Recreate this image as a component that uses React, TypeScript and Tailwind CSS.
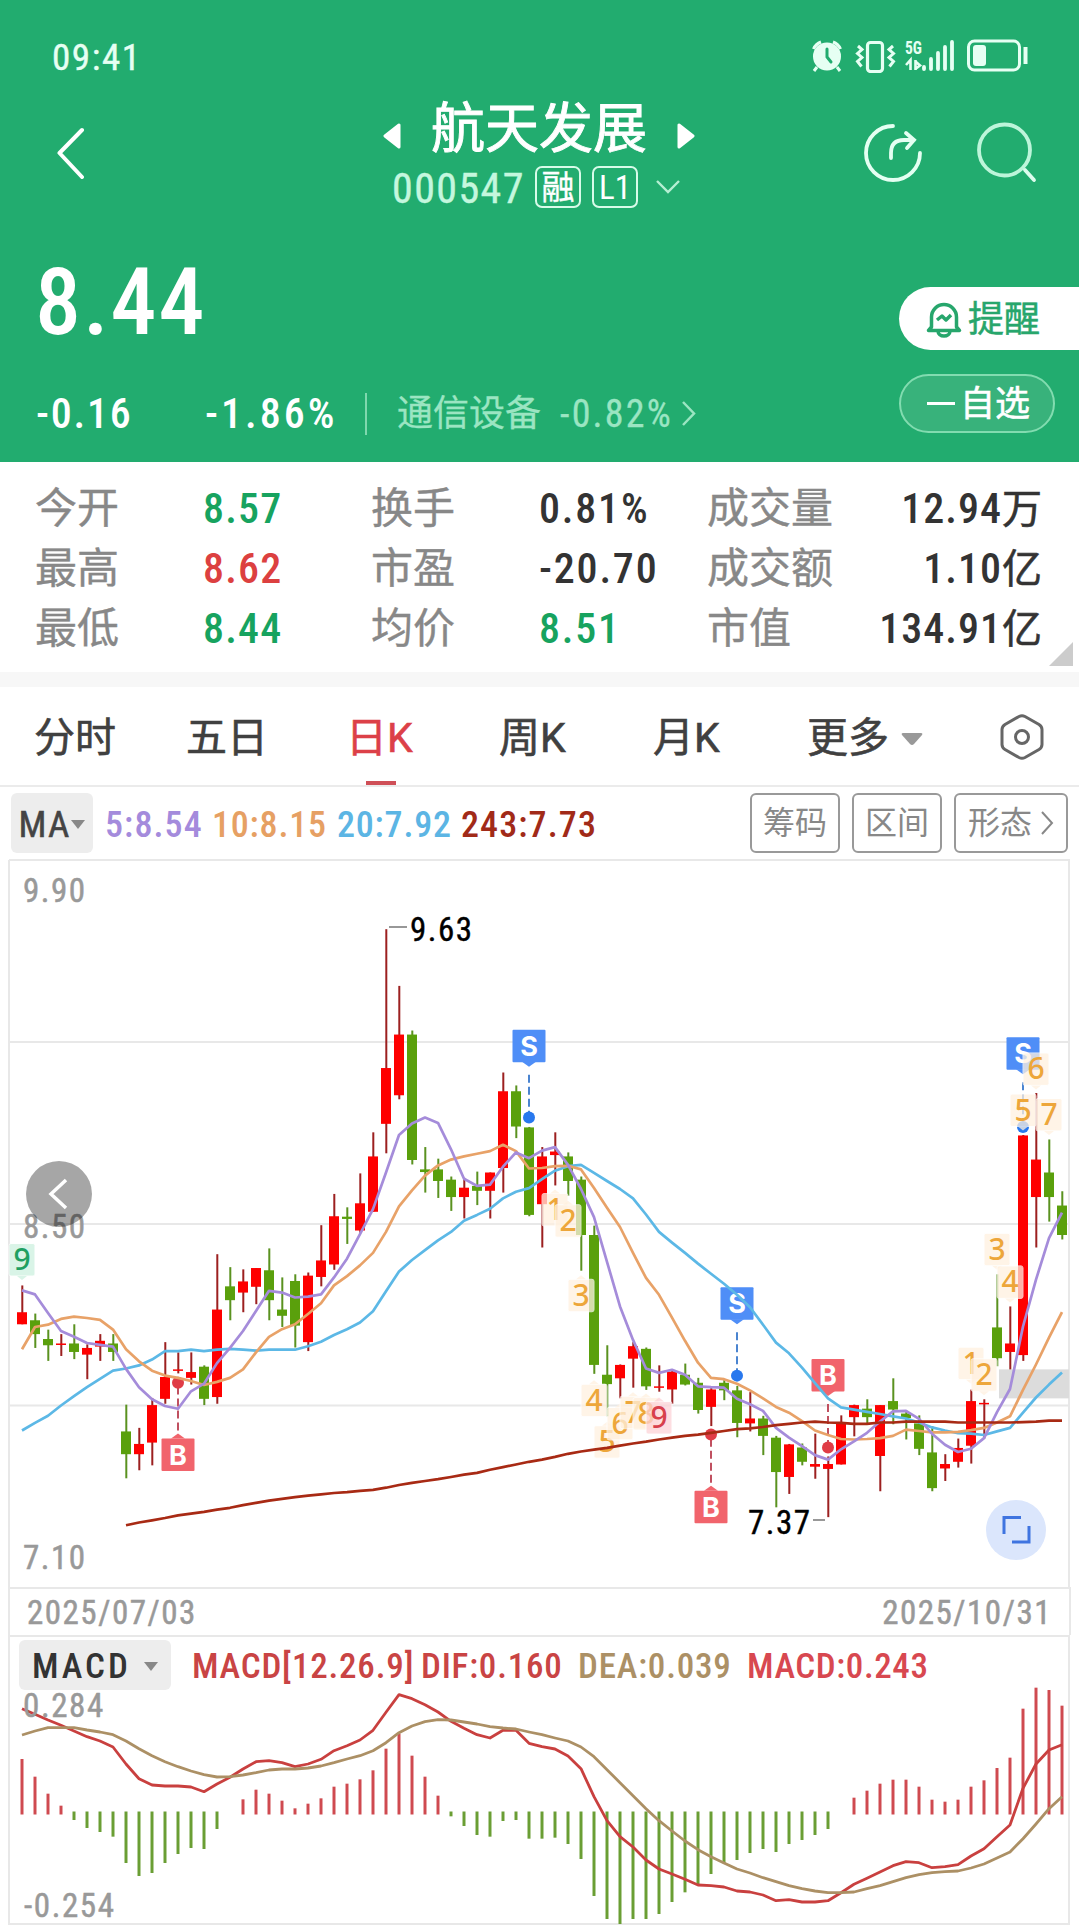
const X0 = 22;
const STEP = 13;
const K_SCALE = 2.24;
const MACD_ZERO = 759;

// high, low, body top, body bottom, rising
const candles: number[][] = [
  [953, 1040, 1013, 1040, 1],
  [1016, 1093, 1031, 1062, 0],
  [1052, 1122, 1073, 1087, 0],
  [1062, 1111, 1083, 1086, 1],
  [1040, 1118, 1083, 1102, 0],
  [1085, 1163, 1093, 1108, 1],
  [1062, 1122, 1077, 1090, 1],
  [1062, 1122, 1083, 1102, 0],
  [1220, 1385, 1280, 1331, 0],
  [1272, 1367, 1308, 1331, 1],
  [1205, 1356, 1221, 1305, 1],
  [1080, 1218, 1158, 1207, 1],
  [1103, 1150, 1141, 1144, 1],
  [1103, 1175, 1147, 1160, 1],
  [1132, 1221, 1135, 1207, 0],
  [883, 1218, 1007, 1203, 1],
  [912, 1031, 955, 986, 0],
  [917, 1013, 944, 969, 1],
  [914, 995, 914, 956, 1],
  [870, 1031, 919, 986, 0],
  [935, 1046, 1007, 1021, 0],
  [928, 1092, 943, 1043, 0],
  [924, 1100, 931, 1080, 1],
  [818, 955, 897, 934, 1],
  [748, 918, 798, 906, 1],
  [778, 860, 799, 804, 0],
  [702, 835, 769, 830, 1],
  [610, 788, 664, 788, 1],
  [155, 657, 466, 591, 1],
  [282, 536, 391, 527, 1],
  [382, 682, 391, 672, 0],
  [643, 745, 693, 699, 0],
  [669, 757, 693, 719, 0],
  [709, 786, 716, 755, 0],
  [712, 803, 734, 755, 1],
  [698, 773, 730, 741, 0],
  [700, 803, 700, 741, 1],
  [476, 745, 518, 690, 1],
  [505, 623, 518, 597, 0],
  [598, 798, 599, 795, 0],
  [643, 868, 664, 771, 1],
  [610, 729, 653, 661, 1],
  [655, 752, 664, 719, 0],
  [709, 920, 716, 840, 0],
  [819, 1151, 840, 1131, 0],
  [1087, 1246, 1153, 1174, 0],
  [1130, 1206, 1131, 1161, 1],
  [1080, 1182, 1089, 1117, 1],
  [1092, 1187, 1095, 1179, 0],
  [1132, 1191, 1179, 1182, 1],
  [1143, 1218, 1146, 1186, 1],
  [1128, 1177, 1153, 1175, 0],
  [1160, 1240, 1171, 1232, 0],
  [1183, 1268, 1186, 1225, 1],
  [1165, 1210, 1171, 1188, 0],
  [1178, 1293, 1188, 1261, 0],
  [1192, 1280, 1251, 1262, 1],
  [1245, 1333, 1251, 1290, 0],
  [1290, 1450, 1294, 1371, 0],
  [1308, 1420, 1309, 1382, 1],
  [1307, 1356, 1316, 1348, 0],
  [1285, 1386, 1353, 1359, 1],
  [1336, 1472, 1353, 1364, 1],
  [1244, 1354, 1259, 1354, 1],
  [1220, 1291, 1221, 1248, 1],
  [1208, 1264, 1229, 1248, 0],
  [1221, 1414, 1221, 1335, 1],
  [1161, 1264, 1212, 1231, 0],
  [1233, 1298, 1240, 1250, 0],
  [1244, 1333, 1262, 1319, 0],
  [1268, 1414, 1327, 1407, 0],
  [1331, 1391, 1353, 1363, 1],
  [1296, 1361, 1317, 1348, 1],
  [1186, 1352, 1212, 1312, 1],
  [1208, 1296, 1216, 1219, 1],
  [928, 1134, 1047, 1116, 0],
  [1000, 1141, 1083, 1102, 1],
  [616, 1122, 617, 1109, 1],
  [522, 868, 671, 755, 1],
  [626, 810, 700, 755, 0],
  [742, 850, 774, 840, 0],
];

const ma5 = [
  964, 973, 1015, 1055, 1068, 1082, 1086, 1090, 1140, 1181, 1208, 1223, 1229, 1190, 1173, 1127, 1093, 1055, 1010, 965,
  969, 980, 978, 973, 935, 893, 838, 782, 700, 616, 590, 577, 589, 648, 714, 730, 727, 687, 655, 668,
  651, 643, 683, 737, 800, 900, 1000, 1075, 1139, 1149, 1142, 1153, 1179, 1181, 1182, 1207, 1219, 1234, 1272, 1294,
  1313, 1333, 1343, 1320, 1302, 1283, 1258, 1235, 1234, 1252, 1285, 1310, 1326, 1319, 1295, 1237, 1185, 1045, 940, 847,
  790,
];
const ma10 = [
  1096, 1046, 1041, 1028, 1023, 1026, 1030, 1052, 1096, 1123, 1144, 1155, 1160, 1167, 1176, 1169, 1160, 1141, 1103, 1068,
  1051, 1040, 1017, 993, 953, 932, 908, 880, 833, 776, 740, 707, 684, 671, 664, 658, 652, 638, 652, 691,
  690, 686, 685, 693, 735, 779, 822, 880, 936, 974, 1025, 1077, 1126, 1160, 1163, 1173, 1188, 1206, 1225, 1238,
  1257, 1278, 1288, 1297, 1298, 1297, 1295, 1290, 1276, 1279, 1282, 1282, 1281, 1277, 1272, 1260, 1246, 1187, 1130, 1070,
  1013,
];
const ma20 = [
  1278, 1261, 1245, 1222, 1201, 1181, 1162, 1144, 1139, 1132, 1119, 1100, 1100, 1097, 1100, 1097, 1095, 1097, 1099, 1097,
  1097, 1097, 1089, 1079, 1064, 1051, 1036, 1011, 966, 922, 896, 874, 852, 833, 808, 795, 781, 758, 743, 735,
  715, 696, 686, 683, 701, 719, 737, 758, 794, 833, 857, 880, 904, 927, 949, 974, 1002, 1041, 1081, 1105,
  1137, 1172, 1206, 1226, 1231, 1236, 1241, 1246, 1251, 1260, 1271, 1278, 1284, 1285, 1288, 1280, 1272, 1238, 1204, 1175,
  1148,
];
// starts at the ninth day
const ma243 = [
  1490, 1484, 1479, 1474, 1468, 1464, 1460, 1455, 1451, 1445, 1440, 1435, 1431, 1427, 1424, 1421, 1418, 1416, 1413, 1411,
  1406, 1400, 1395, 1391, 1387, 1382, 1377, 1373, 1366, 1360, 1354, 1348, 1343, 1337, 1330, 1325, 1321, 1317, 1312, 1307,
  1303, 1298, 1294, 1290, 1287, 1283, 1279, 1275, 1273, 1270, 1266, 1263, 1260, 1258, 1260, 1261, 1263, 1263, 1260, 1260,
  1258, 1258, 1258, 1258, 1260, 1260, 1260, 1260, 1260, 1259, 1258, 1256, 1256,
];

const hist = [
  597, 650, 701, 737, 780, 804, 816, 830, 909, 948, 939, 909, 882, 864, 867, 807, 0, 718, 689, 701,
  722, 745, 731, 715, 680, 671, 658, 631, 566, 521, 587, 650, 707, 769, 798, 825, 830, 783, 780, 836,
  836, 833, 852, 897, 1008, 1077, 1092, 1077, 1077, 1062, 1026, 997, 975, 942, 910, 900, 879, 867, 876, 852,
  840, 825, 807, 0, 713, 692, 671, 659, 659, 680, 719, 725, 719, 680, 661, 624, 593, 446, 383, 390,
  437,
];
const dif = [
  446, 463, 480, 496, 513, 530, 543, 561, 612, 656, 675, 678, 678, 681, 695, 672, 652, 627, 605, 602,
  608, 620, 612, 598, 572, 557, 540, 511, 457, 404, 416, 434, 456, 484, 505, 524, 534, 511, 511, 550,
  560, 567, 588, 626, 710, 782, 830, 861, 900, 927, 942, 958, 975, 977, 981, 993, 996, 1005, 1022, 1019,
  1026, 1026, 1022, 998, 973, 955, 936, 917, 905, 908, 923, 920, 914, 888, 866, 830, 795, 685, 612, 570,
  554,
];
const dea = [
  525, 513, 503, 503, 503, 510, 516, 524, 543, 566, 587, 605, 620, 633, 644, 651, 650, 645, 638, 630,
  627, 627, 624, 618, 608, 597, 587, 572, 548, 518, 498, 485, 479, 480, 486, 492, 500, 504, 507, 516,
  524, 534, 543, 561, 590, 629, 668, 707, 746, 782, 813, 843, 869, 890, 909, 927, 939, 953, 965, 977,
  986, 993, 998, 998, 996, 986, 977, 965, 953, 944, 938, 935, 933, 924, 912, 894, 876, 836, 792, 746,
  710,
];

// day, y, digit, placed above the candle
const counts: [number, number, string, boolean][] = [
  [41, 783, "1", false],
  [42, 808, "2", false],
  [43, 975, "3", false],
  [44, 1210, "4", false],
  [45, 1303, "5", false],
  [46, 1262, "6", false],
  [47, 1237, "7", false],
  [48, 1240, "8", false],
  [49, 1249, "9", false],
  [73, 1127, "1", true],
  [74, 1153, "2", true],
  [75, 872, "3", true],
  [76, 945, "4", true],
  [77, 560, "5", true],
  [78, 468, "6", true],
  [79, 570, "7", true],
  [0, 895, "9", true],
];

// day, flag top, dot
const signals: { type: string; day: number; top: number; dot: number }[] = [
  { type: "S", day: 39, top: 380, dot: 577 },
  { type: "S", day: 55, top: 957, dot: 1155 },
  { type: "S", day: 77, top: 397, dot: 598 },
  { type: "B", day: 62, top: 1118, dot: 1316 },
  { type: "B", day: 12, top: 1296, dot: 1171 },
  { type: "B", day: 53, top: 1413, dot: 1287 },
];

const stats = [
  ["今开", "8.57", "text-[#17a35f]", "换手", "0.81%", "text-[#333]", "成交量", "12.94万"],
  ["最高", "8.62", "text-[#dc4040]", "市盈", "-20.70", "text-[#333]", "成交额", "1.10亿"],
  ["最低", "8.44", "text-[#17a35f]", "均价", "8.51", "text-[#17a35f]", "市值", "134.91亿"],
];

const dayX = (i: number) => X0 + i * STEP;
const kY = (v: number) => v / K_SCALE + 1;
const toPoints = (values: number[], y: (v: number) => number, start = 0) =>
  values.map((v, i) => `${dayX(i + start)},${y(v).toFixed(1)}`).join(" ");

function StatusBar() {
  return (
    <div className="flex h-[112px] items-center pl-[52px] pr-[50px] text-[#e6fff3]">
      <span className="mt-[2px] text-[37px] leading-none tracking-[1.6px] [-webkit-text-stroke:0.4px]">09:41</span>
      <svg className="ml-auto" width="217" height="34" viewBox="0 -1 217 34" fill="none" stroke="currentColor">
        <circle cx="15" cy="16.5" r="14" fill="currentColor" stroke="none" />
        <path d="M1.500 9A13 13 0 0 1 9 2M21 2A13 13 0 0 1 28.500 9M5 27l-3 4M25 27l3 4" strokeWidth="3" />
        <path d="M15 9v8l4 5" stroke="#22ac6f" strokeWidth="3" strokeLinecap="round" />
        <rect x="55.500" y="2.500" width="15" height="29" rx="3" strokeWidth="3.200" />
        <path d="M46 6l4 3.500-4.500 4 4.500 4-4.500 4 4 5M81 6l-4 3.500 4.500 4-4.500 4 4.500 4-4 5" strokeWidth="3" />
        <text x="93" y="14" className="text-[19px] font-bold" textLength="17" lengthAdjust="spacingAndGlyphs" fill="currentColor" stroke="none">
          5G
        </text>
        <path d="M98.500 30V20l-4.500 5M103.500 20v10M104 22l4 3.500-4 3" strokeWidth="2.600" />
        <path d="M112 29v-2M119 29V19M126 29V13M133 29V7M140 29V2" strokeWidth="3.800" strokeLinecap="round" />
        <rect x="156.500" y="1" width="51" height="29" rx="6" strokeWidth="3" />
        <rect x="161" y="5" width="13" height="21" rx="3" fill="currentColor" stroke="none" />
        <path d="M213.500 7v17" strokeWidth="4" />
      </svg>
    </div>
  );
}

function Header() {
  return (
    <header className="h-[462px] bg-[#22ac6f] text-white flex flex-col">
      <StatusBar />
      <div className="-mt-3 flex h-[112px] items-start">
        <svg className="mt-[27px] ml-[55px]" width="32" height="52" fill="none" stroke="currentColor" strokeWidth="4">
          <path d="M27 3L4.500 26 27 50" strokeLinecap="round" strokeLinejoin="round" />
        </svg>
        <div className="ml-[296px] w-[313px]">
          <div className="flex h-[60px] items-center">
            <svg width="18" height="28" className="mt-[12px] shrink-0">
              <path d="M16 3v22L2 14z" fill="currentColor" stroke="currentColor" strokeWidth="3" strokeLinejoin="round" />
            </svg>
            <h1 className="ml-[30px] text-[54px] leading-none whitespace-nowrap [-webkit-text-stroke:0.9px]">航天发展</h1>
            <svg width="18" height="28" className="mt-[12px] ml-[30px] shrink-0">
              <path d="M2 3v22L16 14z" fill="currentColor" stroke="currentColor" strokeWidth="3" strokeLinejoin="round" />
            </svg>
          </div>
          <div className="mt-[6px] ml-[9px] flex h-[42px] items-center">
            <span className="mt-[4px] w-[143px] text-[42px] leading-none tracking-[1.4px] text-[#c4f7de] [-webkit-text-stroke:0.4px]">000547</span>
            <span className="flex h-[42px] w-[46px] shrink-0 items-center justify-center rounded-[7px] border-2 border-[#d8fbe9] text-[33px] leading-none [-webkit-text-stroke:0.4px]">
              融
            </span>
            <span className="ml-[11px] flex h-[42px] w-[46px] shrink-0 items-center justify-center rounded-[7px] border-2 border-[#d8fbe9] text-[33px] leading-none">
              L1
            </span>
            <svg className="ml-[17px] shrink-0" width="26" height="16" fill="none" stroke="#b5efd3" strokeWidth="2.400">
              <path d="M2 2l11 11L24 2" />
            </svg>
          </div>
        </div>
        <svg className="mt-[21px] ml-[166px]" width="62" height="62" fill="none" stroke="#e4fff2" strokeWidth="3.800" strokeLinecap="round">
          <path d="M31 5A27 27 0 1 0 58 32" />
          <path d="M29 37v-5q0-13 13-13h10M44 12l8 7-7 8" />
        </svg>
        <svg className="mt-[22px] ml-[52px]" width="62" height="62" fill="none" stroke="#bdf5da" strokeWidth="3.800">
          <circle cx="28.500" cy="28" r="25.500" />
          <path d="M49 48l9 10" stroke="#dcfced" strokeLinecap="round" />
        </svg>
      </div>
      <div className="flex flex-1 pl-[36px]">
        <div className="flex flex-1 flex-col">
          <div className="mt-[44px] -ml-[1px] h-[94px] text-[92px] leading-[94px] font-medium tracking-[2px]">8.44</div>
          <div className="mt-[41px] flex h-[46px] items-center leading-none">
            <span className="w-[169px] text-[42px] font-medium tracking-[1.8px]">-0.16</span>
            <span className="w-[160px] text-[42px] font-medium tracking-[3px]">-1.86%</span>
            <span className="h-[42px] w-[2px] bg-[#7fd8ae]" />
            <span className="ml-[30px] w-[163px] text-[36px] text-[#9be5c2] [-webkit-text-stroke:0.3px]">通信设备</span>
            <span className="w-[121px] text-[38px] tracking-[2.2px] text-[#9be5c2] [-webkit-text-stroke:0.3px]">-0.82%</span>
            <svg className="-mt-[3px]" width="16" height="28" fill="none" stroke="#9be5c2" strokeWidth="2.500">
              <path d="M2 3l11 11.500L2 26" />
            </svg>
          </div>
        </div>
        <div className="w-[180px] pt-[75px]">
          <div className="flex h-[63px] items-center rounded-l-full bg-white pl-[27px] text-[#27a66c]">
            <svg width="36" height="38" fill="none" stroke="currentColor" strokeWidth="3.500" strokeLinejoin="round">
              <path d="M5.500 27V17a12.500 12.500 0 0 1 25 0v10l3 3.500H2.500z" />
              <path d="M12 31a6 5 0 0 0 12 0M11 20l5-4 4 4 5-5" />
            </svg>
            <span className="mt-[2px] ml-[6px] text-[36px] leading-none [-webkit-text-stroke:0.5px]">提醒</span>
          </div>
          <div className="mt-[24px] flex h-[59px] w-[156px] items-center rounded-full border-2 border-[#82dcb0] bg-[#38b27b] pl-[26px]">
            <span className="h-[3px] w-[28px] bg-white" />
            <span className="mt-[1px] ml-[5px] text-[35px] leading-none [-webkit-text-stroke:0.6px]">自选</span>
          </div>
        </div>
      </div>
    </header>
  );
}

function Stats() {
  const label = "text-[42px] text-[#888] [-webkit-text-stroke:0.4px]";
  return (
    <section className="relative h-[210px] pt-[17px]">
      {stats.map((row) => (
        <div key={row[0]} className="flex h-[60px] items-center pl-[35px] pr-[37px] text-[42px] leading-none">
          <span className={`${label} w-[168px]`}>{row[0]}</span>
          <span className={`w-[168px] font-medium tracking-[1.2px] ${row[2]}`}>{row[1]}</span>
          <span className={`${label} w-[168px]`}>{row[3]}</span>
          <span className={`w-[168px] font-medium tracking-[1.8px] ${row[5]}`}>{row[4]}</span>
          <span className={label}>{row[6]}</span>
          <span className="ml-auto font-medium text-[#333]">
            <span className="tracking-[1px]">{row[7].slice(0, -1)}</span>
            <span className="text-[40px] font-normal [-webkit-text-stroke:0.6px]">{row[7].slice(-1)}</span>
          </span>
        </div>
      ))}
      <svg className="absolute right-[6px] bottom-[6px]" width="24" height="24">
        <path d="M24 0v24H0z" fill="#ccc" />
      </svg>
    </section>
  );
}

function Tabs() {
  return (
    <nav className="flex h-[100px] items-stretch border-b-2 border-[#ebebeb] pl-[34px] text-[41px] leading-none text-[#404040] [-webkit-text-stroke:0.6px]">
      <span className="flex w-[152px] items-center pt-[5px]">分时</span>
      <span className="flex w-[160px] items-center pt-[5px]">五日</span>
      <span className="relative flex w-[153px] items-center pt-[5px] text-[#dc4048]">
        日<span className="font-[Roboto]">K</span>
        <i className="absolute bottom-0 left-[20px] h-[4px] w-[30px] bg-[#cf4f57]" />
      </span>
      <span className="flex w-[154px] items-center pt-[5px]">
        周<span className="font-[Roboto]">K</span>
      </span>
      <span className="flex w-[154px] items-center pt-[5px]">
        月<span className="font-[Roboto]">K</span>
      </span>
      <span className="flex w-[192px] items-center pt-[5px]">
        更多
        <svg className="ml-3" width="22" height="14">
          <path d="M2 1h18q2 0 1 2l-8 9q-2 2-4 0L1 3q-1-2 1-2z" fill="#999" />
        </svg>
      </span>
      <svg className="mt-[26px]" width="46" height="48" fill="none" stroke="#666" strokeWidth="3">
        <path d="M20 3.500q3-1.500 6 0l14 8q3 2 3 5v15q0 3-3 5l-14 8q-3 1.500-6 0l-14-8q-3-2-3-5v-15q0-3 3-5z" />
        <circle cx="23" cy="24" r="6.500" />
      </svg>
    </nav>
  );
}

function Averages() {
  const button = "flex h-[60px] items-center justify-center rounded-[6px] border-2 border-[#999] text-[32px] text-[#888]";
  return (
    <div className="flex h-[72px] items-center pl-[11px] pr-[11px] text-[36px] leading-none font-medium tracking-[1.1px]">
      <div className="flex h-[60px] w-[82px] items-center justify-center rounded-[6px] bg-[#ededed] pt-[2px] text-[37px] font-normal text-[#444] [-webkit-text-stroke:0.5px]">
        MA
        <svg className="ml-[1px]" width="14" height="9">
          <path d="M0 0h14L7 9z" fill="#888" />
        </svg>
      </div>
      <span className="mt-[3px] ml-[12px] w-[107px] text-[#a48bdc]">5:8.54</span>
      <span className="mt-[3px] w-[125px] tracking-[0.8px] text-[#e6a063]">10:8.15</span>
      <span className="mt-[3px] w-[124px] tracking-[0.8px] text-[#5cb5e4]">20:7.92</span>
      <span className="mt-[3px] text-[#a12a18]">243:7.73</span>
      <div className="ml-auto flex gap-[12px] font-normal tracking-normal">
        <span className={`${button} w-[90px]`}>筹码</span>
        <span className={`${button} w-[90px]`}>区间</span>
        <span className={`${button} w-[114px]`}>
          形态
          <svg className="ml-2" width="14" height="26" fill="none" stroke="#888" strokeWidth="2">
            <path d="M2 2l10 11L2 24" />
          </svg>
        </span>
      </div>
    </div>
  );
}

function Signal({ type, day, top, dot }: { type: string; day: number; top: number; dot: number }) {
  const x = dayX(day);
  const y = kY(top);
  const dotY = kY(dot);
  const above = top < dot;
  const color = type === "S" ? "#4f8ef7" : "#f1646c";
  const tip = above ? y + 32 : y;
  return (
    <g>
      <line x1={x} x2={x} y1={above ? y + 45 : y - 8} y2={dotY} stroke={type === "S" ? "#4a84d0" : "#c05060"} strokeWidth="2" strokeDasharray="8 4" />
      <circle cx={x} cy={dotY} r="6" fill={type === "S" ? "#2878ee" : "#e03c46"} />
      <rect x={x - 16.5} y={y} width="33" height="32.500" rx="1" fill={color} />
      <path d={above ? `M${x - 7} ${tip}l7 5 7-5z` : `M${x - 7} ${tip}l7-5 7 5z`} fill={color} />
      <text x={x} y={y + 26} textAnchor="middle" fill="#fff" className="font-[Inter] text-[27px] font-bold">
        {type}
      </text>
    </g>
  );
}

function CountTag({ day, y, digit, above }: { day: number; y: number; digit: string; above: boolean }) {
  const x = dayX(day);
  const cy = kY(y);
  let fill = "#fff1e0";
  let color = "#eda63a";
  if (digit === "9") {
    fill = day === 0 ? "#cdf1df" : "#fdd3d8";
    color = day === 0 ? "#1fa062" : "#d8404c";
  }
  return (
    <g>
      <g fill={fill} opacity="0.75">
        <rect x={x - 13} y={cy - 16} width="26" height="32.500" rx="2" stroke="#fff" strokeWidth="1" />
        <path d={above ? `M${x - 5} ${cy + 16.5}l5 4 5-4z` : `M${x - 5} ${cy - 16}l5-4 5 4z`} />
      </g>
      <text x={x} y={cy + 10.5} textAnchor="middle" fill={color} className="font-['Noto_Sans'] text-[30px] font-medium">
        {digit}
      </text>
    </g>
  );
}

function KChart() {
  return (
    <svg className="block" width="1079" height="728" viewBox="0 0 1079 728">
      <g fill="none" stroke="#e8e8e8" strokeWidth="2">
        <path d="M9 1H1069V728M9 1V728M9 183H1069M9 365H1069M9 546.500H1069" />
      </g>
      <g className="text-[33px] tracking-[1.5px]" fill="#999" stroke="#999" strokeWidth="0.5">
        <text x="23" y="43">9.90</text>
        <text x="23" y="379">8.50</text>
        <text x="23" y="710">7.10</text>
      </g>
      <rect x="999" y={kY(1141)} width="70" height="29" fill="#dcdcdc" />
      {candles.map(([high, low, top, bottom, up], i) => (
        <g key={i}>
          <rect x={dayX(i) - 0.7} y={kY(high)} width="2" height={(low - high) / K_SCALE} fill={up ? "#9c2020" : "#5a9220"} />
          <rect x={dayX(i) - 5} y={kY(top)} width="10" height={Math.max((bottom - top) / K_SCALE, 1.5)} fill={up ? "#fe0000" : "#5aa00c"} />
        </g>
      ))}
      {signals.map((s) => (
        <Signal key={s.day} {...s} />
      ))}
      {counts.map(([day, y, digit, above]) => (
        <CountTag key={day} day={day} y={y} digit={digit} above={above} />
      ))}
      <g fill="none" strokeWidth="2.700" strokeLinejoin="round">
        <polyline points={toPoints(ma20, kY)} stroke="#5cb8e6" />
        <polyline points={toPoints(ma10, kY)} stroke="#e8a268" />
        <polyline points={toPoints(ma5, kY)} stroke="#a58cda" />
        <polyline points={toPoints(ma243, kY, 8)} stroke="#a82a14" />
      </g>
      <path d="M389 68h18M813 661h12" stroke="#777" strokeWidth="1.500" />
      <g className="text-[33px] tracking-[1.5px]" fill="#000" stroke="#000" strokeWidth="0.4">
        <text x="410" y="82">9.63</text>
        <text x="748" y="675">7.37</text>
      </g>
      <circle cx="59" cy="335" r="33" fill="#000" opacity="0.350" />
      <path d="M66 321L51 335l15 14" fill="none" stroke="#fff" strokeWidth="3.500" />
      <circle cx="1016" cy="671" r="30" fill="#dbe6fc" />
      <path d="M1004 675V658.500h17M1012 683h17V667" fill="none" stroke="#3f74e0" strokeWidth="3" />
    </svg>
  );
}

function Macd() {
  const y = (v: number) => v / 3 - 75;
  return (
    <section className="relative h-[296px]">
      <svg className="block" width="1079" height="296">
        <path d="M9 0V289H1069V0M9 1H1069" fill="none" stroke="#e8e8e8" strokeWidth="2" />
        {hist.map((v, i) =>
          v === 0 ? null : (
            <line
              key={i}
              x1={dayX(i)}
              x2={dayX(i)}
              y1={y(MACD_ZERO) + (v < MACD_ZERO ? 1.5 : -1.5)}
              y2={y(v)}
              stroke={v < MACD_ZERO ? "#cf4a50" : "#6a9e34"}
              strokeWidth="3"
            />
          ),
        )}
        <g fill="none" strokeWidth="2.800" strokeLinejoin="round">
          <polyline points={toPoints(dif, y)} stroke="#c9403f" />
          <polyline points={toPoints(dea, y)} stroke="#ac9065" />
        </g>
        <g className="text-[33px] tracking-[1.6px]" fill="#999" stroke="#999" strokeWidth="0.5">
          <text x="23" y="82">0.284</text>
          <text x="24" y="282">-0.254</text>
        </g>
      </svg>
      <div className="absolute top-[5px] left-[19px] flex h-[50px] items-center text-[35px] leading-none font-medium tracking-[0.8px] whitespace-nowrap">
        <span className="flex h-[50px] w-[152px] items-center rounded-[6px] bg-[#ededed] pt-[2px] pl-[13px] tracking-[3px] text-[#333]">
          MACD
          <svg className="ml-[13px]" width="14" height="9">
            <path d="M0 0h14L7 9z" fill="#888" />
          </svg>
        </span>
        <span className="mt-[2px] ml-[21px] w-[229px] text-[#c94444]">MACD[12.26.9]</span>
        <span className="mt-[2px] w-[157px] text-[#c94444]">DIF:0.160</span>
        <span className="mt-[2px] w-[169px] text-[#ac9065]">DEA:0.039</span>
        <span className="mt-[2px] tracking-[0.6px] text-[#d84850]">MACD:0.243</span>
      </div>
    </section>
  );
}

export default function App() {
  return (
    <div className="w-[1079px] h-[1931px] overflow-hidden bg-white font-['Roboto_Condensed','Noto_Sans_CJK_SC',sans-serif]">
      <Header />
      <Stats />
      <div className="h-[15px] bg-[#f7f7f7]" />
      <Tabs />
      <Averages />
      <KChart />
      <div className="mx-[8px] flex h-[48px] items-center justify-between border-x-2 border-t-2 border-[#e8e8e8] pr-[17px] pl-[17px] text-[33px] leading-none tracking-[1.5px] text-[#999] [-webkit-text-stroke:0.5px]">
        <span>2025/07/03</span>
        <span>2025/10/31</span>
      </div>
      <Macd />
    </div>
  );
}
